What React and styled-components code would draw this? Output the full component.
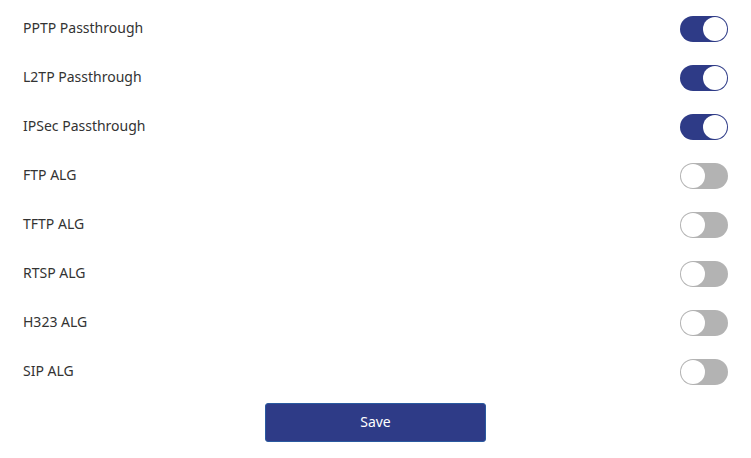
import React, { useState } from 'react';
import styled, { createGlobalStyle } from 'styled-components';

const GlobalStyle = createGlobalStyle`
  body {
    margin: 0;
    background: #fff;
    font-family: "Noto Sans", "Open Sans", sans-serif;
  }
`

const Page = styled.div`
  width: 751px;
  padding: 4px 23px 0;
  box-sizing: border-box;
`

const Row = styled.div`
  height: 49px;
  display: flex;
  align-items: center;
  justify-content: space-between;
`

const Label = styled.span`
  font-size: 14px;
  color: #333;
  padding-bottom: 2px;
`

const Track = styled.button`
  width: 48px;
  height: 26px;
  border: none;
  border-radius: 13px;
  padding: 1px;
  background: ${p => (p.on ? '#2e3b87' : '#b3b3b3')};
  display: flex;
  justify-content: ${p => (p.on ? 'flex-end' : 'flex-start')};
  cursor: pointer;
`

const Knob = styled.span`
  width: 24px;
  height: 24px;
  border-radius: 50%;
  background: #fff;
  box-sizing: border-box;
`

const Footer = styled.div`
  display: flex;
  justify-content: center;
  padding-top: 7px;
`

const SaveButton = styled.button`
  width: 221px;
  height: 39px;
  background: #2e3b87;
  color: #fff;
  border: 1px solid #2a5aa0;
  border-radius: 3px;
  font-family: "Noto Sans", "Open Sans", sans-serif;
  font-size: 14px;
  padding: 0 0 2px;
  cursor: pointer;
`

const items = [
  ['PPTP Passthrough', true],
  ['L2TP Passthrough', true],
  ['IPSec Passthrough', true],
  ['FTP ALG', false],
  ['TFTP ALG', false],
  ['RTSP ALG', false],
  ['H323 ALG', false],
  ['SIP ALG', false],
]

const App = () => {
  const [state, setState] = useState(items.map(i => i[1]))

  const flip = idx => setState(s => s.map((v, i) => (i === idx ? !v : v)))

  return (
    <Page>
      <GlobalStyle />
      {items.map(([name], i) => (
        <Row key={name}>
          <Label>{name}</Label>
          <Track on={state[i] ? 1 : 0} onClick={() => flip(i)}>
            <Knob />
          </Track>
        </Row>
      ))}
      <Footer>
        <SaveButton>Save</SaveButton>
      </Footer>
    </Page>
  )
}

export default App
